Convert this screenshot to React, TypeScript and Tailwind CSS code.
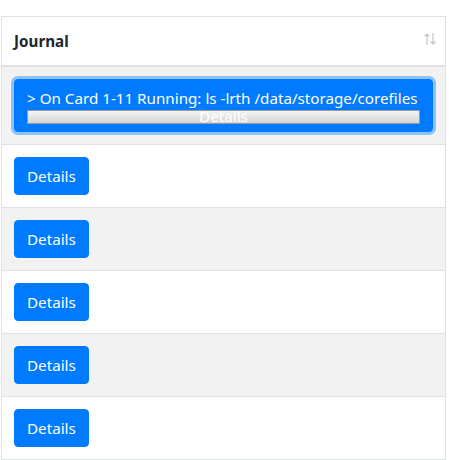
const rows = [1, 2, 3, 4, 5];

function DetailsButton() {
  return (
    <button className="rounded-[4px] border border-[#007bff] bg-[#007bff] px-3 py-[6px] text-[15.2px] leading-6 text-white">
      Details
    </button>
  );
}

function SortIcon() {
  return (
    <svg width="14" height="14" viewBox="0 0 14 14" fill="none" stroke="#c6c6c6" strokeWidth="1.2">
      <path d="M4 13V2M1.5 4.5L4 2l2.5 2.5" />
      <path d="M10 1v11M7.5 9.5L10 12l2.5-2.5" />
    </svg>
  );
}

export default function App() {
  return (
    <div className="bg-white pt-4 pl-px font-['Segoe_UI','Noto_Sans',sans-serif] text-[#212529]">
      <table className="w-[445px] table-fixed border-collapse border border-[#dee2e6]">
        <thead>
          <tr>
            <th className="border-b-2 border-[#dee2e6] p-3 text-left">
              <div className="flex items-center justify-between">
                <span className="text-[15.2px] leading-6 font-bold">Journal</span>
                <span className="-mr-1 -mt-1">
                  <SortIcon />
                </span>
              </div>
            </th>
          </tr>
        </thead>
        <tbody>
          <tr className="border-b border-[#dee2e6] bg-[#f2f2f2]">
            <td className="p-3">
              <div className="flex flex-col rounded-[4px] border border-[#007bff] bg-[#007bff] px-3 pt-[6px] pb-[7px] text-white shadow-[0_0_0_3px_rgba(38,143,255,0.5)]">
                <span className="text-[15.2px] leading-6 whitespace-nowrap">
                  &gt; On Card 1-11 Running: ls -lrth /data/storage/corefiles
                </span>
                <div className="flex h-[14px] items-center justify-center border border-[#9a9a9a] bg-gradient-to-b from-[#f4f4f4] to-[#d6d6d6] text-[15.2px] leading-none text-white">
                  Details
                </div>
              </div>
            </td>
          </tr>
          {rows.map((r) => (
            <tr
              key={r}
              className={`border-b border-[#dee2e6] ${r % 2 === 0 ? "bg-[#f2f2f2]" : "bg-white"}`}
            >
              <td className="p-3">
                <DetailsButton />
              </td>
            </tr>
          ))}
        </tbody>
      </table>
    </div>
  );
}
